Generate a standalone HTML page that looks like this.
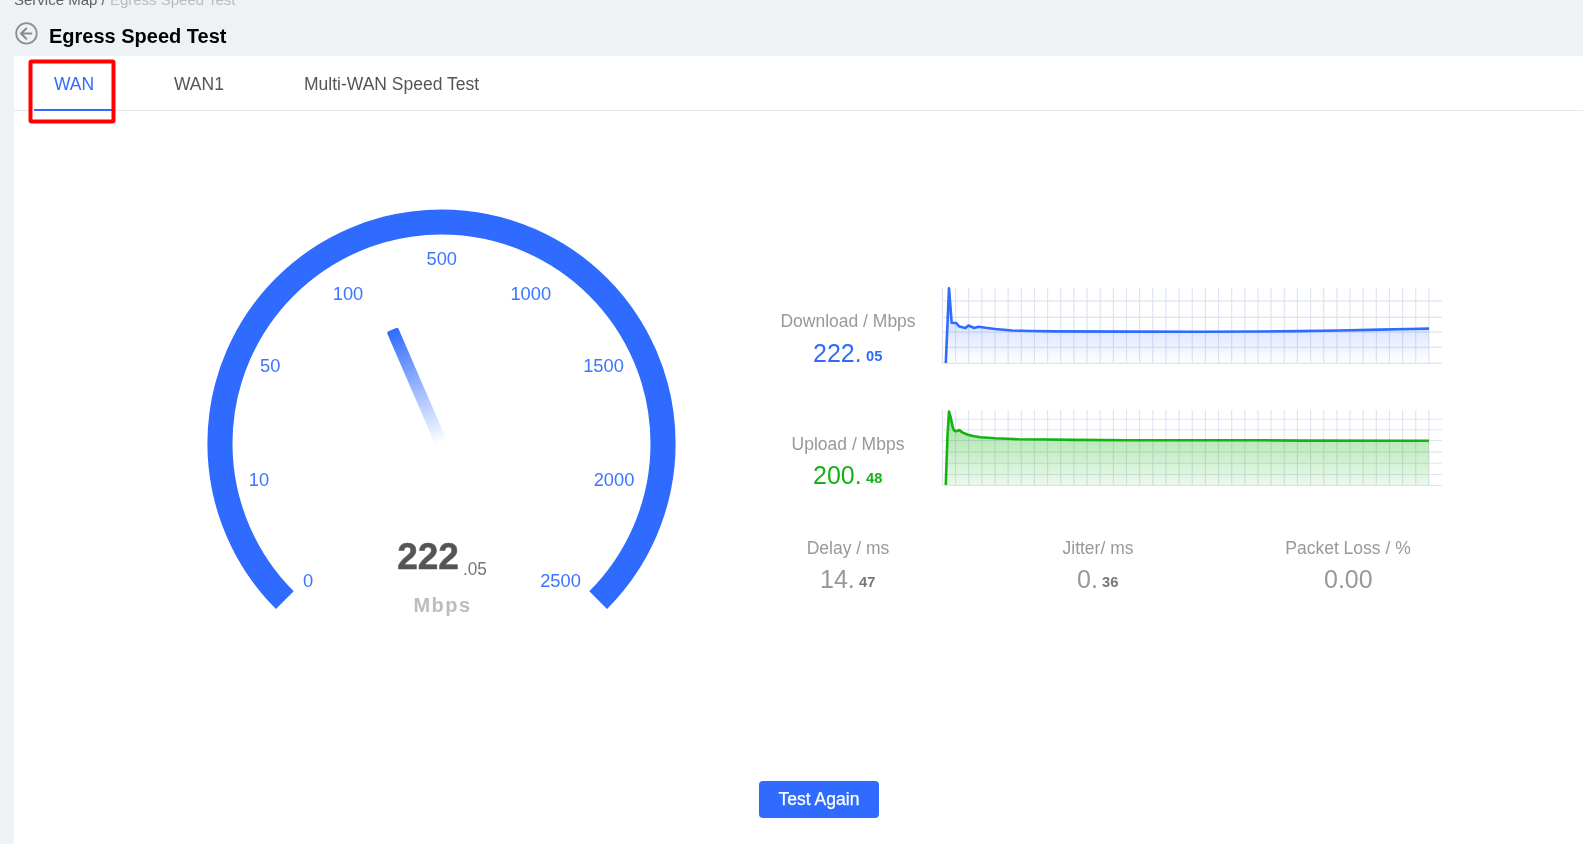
<!DOCTYPE html>
<html><head><meta charset="utf-8"><title>Egress Speed Test</title>
<style>
html,body{margin:0;padding:0}
body{width:1583px;height:844px;overflow:hidden;background:#eef2f5;position:relative;font-family:"Liberation Sans",sans-serif}
.abs{position:absolute}
svg{will-change:transform}
.t{position:absolute;white-space:nowrap;will-change:transform}
</style></head><body>
<div class="t" style="left:14.30px;top:-10.70px;font-size:15px;line-height:21px;color:#606266;font-weight:400;"><span style="color:#5f6368">Service Map / </span><span style="color:#b7bbc2">Egress Speed Test</span></div>
<svg class="abs" style="left:13px;top:20px" width="28" height="28" viewBox="0 0 28 28">
<circle cx="13.45" cy="13.4" r="10.25" fill="none" stroke="#8e8e8e" stroke-width="1.8"/>
<path d="M18.4 13.5H8.4M13.2 8.5L8 13.5L13.3 18.7" fill="none" stroke="#8a8a8a" stroke-width="2" stroke-linecap="round" stroke-linejoin="round"/>
</svg>
<div class="t" style="left:49.40px;top:21.77px;font-size:20px;line-height:28px;color:#000;font-weight:700;">Egress Speed Test</div>
<div class="abs" style="left:14px;top:56px;width:1569px;height:788px;background:#fff"></div>
<div class="abs" style="left:14px;top:110px;width:1569px;height:1px;background:#e4e7ed"></div>
<div class="abs" style="left:34px;top:108.5px;width:77.5px;height:2px;background:#2f6bff"></div>
<div class="t" style="left:54.30px;top:71.54px;font-size:17.5px;line-height:24px;color:#2f6bff;font-weight:400;">WAN</div>
<div class="t" style="left:174.40px;top:71.54px;font-size:17.5px;line-height:24px;color:#555;font-weight:400;">WAN1</div>
<div class="t" style="left:304.00px;top:71.54px;font-size:17.5px;line-height:24px;color:#555;font-weight:400;">Multi-WAN Speed Test</div>
<svg class="abs" style="left:20px;top:50px" width="110" height="90" viewBox="20 50 110 90"><rect x="30.5" y="61.4" width="83" height="60.1" rx="1.2" fill="none" stroke="#ff0000" stroke-width="4"/></svg>
<svg class="abs" style="left:0;top:0" width="1583" height="844" viewBox="0 0 1583 844" font-family="Liberation Sans, sans-serif"><path d="M284.84 600.16A221.55 221.55 0 1 1 598.16 600.16" fill="none" stroke="#2f6bff" stroke-width="25.10"/>
<defs><linearGradient id="ng" x1="0" y1="-124" x2="0" y2="0" gradientUnits="userSpaceOnUse">
<stop offset="0" stop-color="#2f6bff" stop-opacity="1"/><stop offset="1" stop-color="#2f6bff" stop-opacity="0"/></linearGradient></defs>
<g transform="translate(441.5 443.5) rotate(-23.4)"><path d="M-6.1 0V-122Q-6.1 -124 -4.1 -124H4.1Q6.1 -124 6.1 -122V0Z" fill="url(#ng)"/></g>
<text x="308.2" y="587.1" text-anchor="middle" font-size="18.3" fill="#3c75ff">0</text>
<text x="259.0" y="486.0" text-anchor="middle" font-size="18.3" fill="#3c75ff">10</text>
<text x="270.2" y="372.0" text-anchor="middle" font-size="18.3" fill="#3c75ff">50</text>
<text x="348.0" y="299.5" text-anchor="middle" font-size="18.3" fill="#3c75ff">100</text>
<text x="441.8" y="265.4" text-anchor="middle" font-size="18.3" fill="#3c75ff">500</text>
<text x="530.8" y="299.5" text-anchor="middle" font-size="18.3" fill="#3c75ff">1000</text>
<text x="603.5" y="372.0" text-anchor="middle" font-size="18.3" fill="#3c75ff">1500</text>
<text x="614.0" y="486.0" text-anchor="middle" font-size="18.3" fill="#3c75ff">2000</text>
<text x="560.5" y="587.0" text-anchor="middle" font-size="18.3" fill="#3c75ff">2500</text>
<text x="428" y="569.3" text-anchor="middle" font-size="37" font-weight="700" fill="#555" stroke="#555" stroke-width="0.55">222</text>
<text x="462.9" y="574.6" font-size="18.8" fill="#777" textLength="24" lengthAdjust="spacingAndGlyphs">.05</text>
<text x="442.6" y="611.9" text-anchor="middle" font-size="20" font-weight="700" fill="#bdbdbd" letter-spacing="1.55">Mbps</text></svg>
<div class="t" style="left:348.00px;width:1000px;text-align:center;top:308.94px;font-size:17.5px;line-height:24px;color:#999;font-weight:400;">Download / Mbps</div>
<div class="t" style="left:813.00px;top:335.84px;font-size:25px;line-height:35px;color:#2f6bff;font-weight:400;">222.</div>
<div class="t" style="left:866.10px;top:346.41px;font-size:14.7px;line-height:21px;color:#2f6bff;font-weight:700;">05</div>
<div class="t" style="left:348.00px;width:1000px;text-align:center;top:431.64px;font-size:17.5px;line-height:24px;color:#999;font-weight:400;">Upload / Mbps</div>
<div class="t" style="left:813.00px;top:457.84px;font-size:25px;line-height:35px;color:#12b312;font-weight:400;">200.</div>
<div class="t" style="left:865.80px;top:468.41px;font-size:14.7px;line-height:21px;color:#12b312;font-weight:700;">48</div>
<div class="t" style="left:348.00px;width:1000px;text-align:center;top:535.84px;font-size:17.5px;line-height:24px;color:#999;font-weight:400;">Delay / ms</div>
<div class="t" style="left:598.00px;width:1000px;text-align:center;top:535.84px;font-size:17.5px;line-height:24px;color:#999;font-weight:400;">Jitter/ ms</div>
<div class="t" style="left:848.00px;width:1000px;text-align:center;top:535.84px;font-size:17.5px;line-height:24px;color:#999;font-weight:400;">Packet Loss / %</div>
<div class="t" style="left:820.20px;top:561.84px;font-size:25px;line-height:35px;color:#999;font-weight:400;">14.</div>
<div class="t" style="left:859.00px;top:572.41px;font-size:14.7px;line-height:21px;color:#777;font-weight:700;">47</div>
<div class="t" style="left:1076.60px;top:561.84px;font-size:25px;line-height:35px;color:#999;font-weight:400;">0.</div>
<div class="t" style="left:1102.30px;top:572.41px;font-size:14.7px;line-height:21px;color:#777;font-weight:700;">36</div>
<div class="t" style="left:1323.50px;top:561.84px;font-size:25px;line-height:35px;color:#999;font-weight:400;">0.00</div>
<svg class="abs" style="left:0;top:0" width="1583" height="844" viewBox="0 0 1583 844"><path d="M942.40 287.8V363.4" stroke="#dee4f0" stroke-width="1.15"/>
<path d="M955.55 287.8V363.4" stroke="#dee4f0" stroke-width="1.15"/>
<path d="M968.70 287.8V363.4" stroke="#dee4f0" stroke-width="1.15"/>
<path d="M981.85 287.8V363.4" stroke="#dee4f0" stroke-width="1.15"/>
<path d="M995.00 287.8V363.4" stroke="#dee4f0" stroke-width="1.15"/>
<path d="M1008.14 287.8V363.4" stroke="#dee4f0" stroke-width="1.15"/>
<path d="M1021.29 287.8V363.4" stroke="#dee4f0" stroke-width="1.15"/>
<path d="M1034.44 287.8V363.4" stroke="#dee4f0" stroke-width="1.15"/>
<path d="M1047.59 287.8V363.4" stroke="#dee4f0" stroke-width="1.15"/>
<path d="M1060.74 287.8V363.4" stroke="#dee4f0" stroke-width="1.15"/>
<path d="M1073.89 287.8V363.4" stroke="#dee4f0" stroke-width="1.15"/>
<path d="M1087.04 287.8V363.4" stroke="#dee4f0" stroke-width="1.15"/>
<path d="M1100.19 287.8V363.4" stroke="#dee4f0" stroke-width="1.15"/>
<path d="M1113.34 287.8V363.4" stroke="#dee4f0" stroke-width="1.15"/>
<path d="M1126.49 287.8V363.4" stroke="#dee4f0" stroke-width="1.15"/>
<path d="M1139.63 287.8V363.4" stroke="#dee4f0" stroke-width="1.15"/>
<path d="M1152.78 287.8V363.4" stroke="#dee4f0" stroke-width="1.15"/>
<path d="M1165.93 287.8V363.4" stroke="#dee4f0" stroke-width="1.15"/>
<path d="M1179.08 287.8V363.4" stroke="#dee4f0" stroke-width="1.15"/>
<path d="M1192.23 287.8V363.4" stroke="#dee4f0" stroke-width="1.15"/>
<path d="M1205.38 287.8V363.4" stroke="#dee4f0" stroke-width="1.15"/>
<path d="M1218.53 287.8V363.4" stroke="#dee4f0" stroke-width="1.15"/>
<path d="M1231.68 287.8V363.4" stroke="#dee4f0" stroke-width="1.15"/>
<path d="M1244.83 287.8V363.4" stroke="#dee4f0" stroke-width="1.15"/>
<path d="M1257.98 287.8V363.4" stroke="#dee4f0" stroke-width="1.15"/>
<path d="M1271.12 287.8V363.4" stroke="#dee4f0" stroke-width="1.15"/>
<path d="M1284.27 287.8V363.4" stroke="#dee4f0" stroke-width="1.15"/>
<path d="M1297.42 287.8V363.4" stroke="#dee4f0" stroke-width="1.15"/>
<path d="M1310.57 287.8V363.4" stroke="#dee4f0" stroke-width="1.15"/>
<path d="M1323.72 287.8V363.4" stroke="#dee4f0" stroke-width="1.15"/>
<path d="M1336.87 287.8V363.4" stroke="#dee4f0" stroke-width="1.15"/>
<path d="M1350.02 287.8V363.4" stroke="#dee4f0" stroke-width="1.15"/>
<path d="M1363.17 287.8V363.4" stroke="#dee4f0" stroke-width="1.15"/>
<path d="M1376.32 287.8V363.4" stroke="#dee4f0" stroke-width="1.15"/>
<path d="M1389.47 287.8V363.4" stroke="#dee4f0" stroke-width="1.15"/>
<path d="M1402.62 287.8V363.4" stroke="#dee4f0" stroke-width="1.15"/>
<path d="M1415.76 287.8V363.4" stroke="#dee4f0" stroke-width="1.15"/>
<path d="M1428.91 287.8V363.4" stroke="#dee4f0" stroke-width="1.15"/>
<path d="M941.9 363.40H1441.9" stroke="#dee4f0" stroke-width="1.15"/>
<path d="M941.9 347.30H1441.9" stroke="#dee4f0" stroke-width="1.15"/>
<path d="M941.9 332.10H1441.9" stroke="#dee4f0" stroke-width="1.15"/>
<path d="M941.9 317.30H1441.9" stroke="#dee4f0" stroke-width="1.15"/>
<path d="M941.9 300.90H1441.9" stroke="#dee4f0" stroke-width="1.15"/>
<defs><linearGradient id="gd" x1="0" y1="288.3" x2="0" y2="363.4" gradientUnits="userSpaceOnUse"><stop offset="0" stop-color="#2f6bff" stop-opacity="0.36"/><stop offset="1" stop-color="#2f6bff" stop-opacity="0.0"/></linearGradient></defs>
<path d="M945.8 363.0L949.0 288.3L951.7 322.8L956.2 323.0L959.3 326.5L965.4 328.0L968.5 325.5L974.2 328.0L978.6 326.7L985.6 327.8L995.1 329.0L1012.1 330.5L1031.1 331.0L1056.3 331.4L1130.0 331.6L1200.0 331.8L1260.0 331.5L1300.0 331.1L1340.0 330.5L1380.0 329.6L1410.0 329.0L1429.0 328.6L1429.0 363.4L945.8 363.4Z" fill="url(#gd)"/>
<path d="M945.8 363.0L949.0 288.3L951.7 322.8L956.2 323.0L959.3 326.5L965.4 328.0L968.5 325.5L974.2 328.0L978.6 326.7L985.6 327.8L995.1 329.0L1012.1 330.5L1031.1 331.0L1056.3 331.4L1130.0 331.6L1200.0 331.8L1260.0 331.5L1300.0 331.1L1340.0 330.5L1380.0 329.6L1410.0 329.0L1429.0 328.6" fill="none" stroke="#2f6bff" stroke-width="2.6" stroke-linejoin="round"/><path d="M942.40 410.1V485.5" stroke="#dee4f0" stroke-width="1.15"/>
<path d="M955.55 410.1V485.5" stroke="#dee4f0" stroke-width="1.15"/>
<path d="M968.70 410.1V485.5" stroke="#dee4f0" stroke-width="1.15"/>
<path d="M981.85 410.1V485.5" stroke="#dee4f0" stroke-width="1.15"/>
<path d="M995.00 410.1V485.5" stroke="#dee4f0" stroke-width="1.15"/>
<path d="M1008.14 410.1V485.5" stroke="#dee4f0" stroke-width="1.15"/>
<path d="M1021.29 410.1V485.5" stroke="#dee4f0" stroke-width="1.15"/>
<path d="M1034.44 410.1V485.5" stroke="#dee4f0" stroke-width="1.15"/>
<path d="M1047.59 410.1V485.5" stroke="#dee4f0" stroke-width="1.15"/>
<path d="M1060.74 410.1V485.5" stroke="#dee4f0" stroke-width="1.15"/>
<path d="M1073.89 410.1V485.5" stroke="#dee4f0" stroke-width="1.15"/>
<path d="M1087.04 410.1V485.5" stroke="#dee4f0" stroke-width="1.15"/>
<path d="M1100.19 410.1V485.5" stroke="#dee4f0" stroke-width="1.15"/>
<path d="M1113.34 410.1V485.5" stroke="#dee4f0" stroke-width="1.15"/>
<path d="M1126.49 410.1V485.5" stroke="#dee4f0" stroke-width="1.15"/>
<path d="M1139.63 410.1V485.5" stroke="#dee4f0" stroke-width="1.15"/>
<path d="M1152.78 410.1V485.5" stroke="#dee4f0" stroke-width="1.15"/>
<path d="M1165.93 410.1V485.5" stroke="#dee4f0" stroke-width="1.15"/>
<path d="M1179.08 410.1V485.5" stroke="#dee4f0" stroke-width="1.15"/>
<path d="M1192.23 410.1V485.5" stroke="#dee4f0" stroke-width="1.15"/>
<path d="M1205.38 410.1V485.5" stroke="#dee4f0" stroke-width="1.15"/>
<path d="M1218.53 410.1V485.5" stroke="#dee4f0" stroke-width="1.15"/>
<path d="M1231.68 410.1V485.5" stroke="#dee4f0" stroke-width="1.15"/>
<path d="M1244.83 410.1V485.5" stroke="#dee4f0" stroke-width="1.15"/>
<path d="M1257.98 410.1V485.5" stroke="#dee4f0" stroke-width="1.15"/>
<path d="M1271.12 410.1V485.5" stroke="#dee4f0" stroke-width="1.15"/>
<path d="M1284.27 410.1V485.5" stroke="#dee4f0" stroke-width="1.15"/>
<path d="M1297.42 410.1V485.5" stroke="#dee4f0" stroke-width="1.15"/>
<path d="M1310.57 410.1V485.5" stroke="#dee4f0" stroke-width="1.15"/>
<path d="M1323.72 410.1V485.5" stroke="#dee4f0" stroke-width="1.15"/>
<path d="M1336.87 410.1V485.5" stroke="#dee4f0" stroke-width="1.15"/>
<path d="M1350.02 410.1V485.5" stroke="#dee4f0" stroke-width="1.15"/>
<path d="M1363.17 410.1V485.5" stroke="#dee4f0" stroke-width="1.15"/>
<path d="M1376.32 410.1V485.5" stroke="#dee4f0" stroke-width="1.15"/>
<path d="M1389.47 410.1V485.5" stroke="#dee4f0" stroke-width="1.15"/>
<path d="M1402.62 410.1V485.5" stroke="#dee4f0" stroke-width="1.15"/>
<path d="M1415.76 410.1V485.5" stroke="#dee4f0" stroke-width="1.15"/>
<path d="M1428.91 410.1V485.5" stroke="#dee4f0" stroke-width="1.15"/>
<path d="M941.9 485.50H1441.9" stroke="#dee4f0" stroke-width="1.15"/>
<path d="M941.9 474.50H1441.9" stroke="#dee4f0" stroke-width="1.15"/>
<path d="M941.9 463.20H1441.9" stroke="#dee4f0" stroke-width="1.15"/>
<path d="M941.9 451.80H1441.9" stroke="#dee4f0" stroke-width="1.15"/>
<path d="M941.9 440.50H1441.9" stroke="#dee4f0" stroke-width="1.15"/>
<path d="M941.9 429.70H1441.9" stroke="#dee4f0" stroke-width="1.15"/>
<path d="M941.9 419.20H1441.9" stroke="#dee4f0" stroke-width="1.15"/>
<defs><linearGradient id="gu" x1="0" y1="411.6" x2="0" y2="485.5" gradientUnits="userSpaceOnUse"><stop offset="0" stop-color="#12b312" stop-opacity="0.42"/><stop offset="1" stop-color="#12b312" stop-opacity="0.08"/></linearGradient></defs>
<path d="M945.8 485.0L947.4 438.0L949.0 411.6L950.8 417.7L952.5 426.5L954.0 430.3L955.9 431.3L959.3 430.1L962.8 432.6L967.9 434.7L974.2 436.3L980.5 437.3L995.1 438.3L1018.4 439.2L1047.5 439.5L1073.7 439.9L1130.0 440.2L1260.0 440.2L1300.0 440.6L1429.0 440.7L1429.0 485.5L945.8 485.5Z" fill="url(#gu)"/>
<path d="M945.8 485.0L947.4 438.0L949.0 411.6L950.8 417.7L952.5 426.5L954.0 430.3L955.9 431.3L959.3 430.1L962.8 432.6L967.9 434.7L974.2 436.3L980.5 437.3L995.1 438.3L1018.4 439.2L1047.5 439.5L1073.7 439.9L1130.0 440.2L1260.0 440.2L1300.0 440.6L1429.0 440.7" fill="none" stroke="#12b312" stroke-width="2.6" stroke-linejoin="round"/></svg>
<div class="abs" style="left:759px;top:781px;width:120px;height:37px;border-radius:4px;background:#2f6bff"></div>
<div class="t" style="left:319.20px;width:1000px;text-align:center;top:786.84px;font-size:17.5px;line-height:24px;color:#fff;font-weight:400;letter-spacing:0.02px;-webkit-text-stroke:0.25px #fff;">Test Again</div>
</body></html>
